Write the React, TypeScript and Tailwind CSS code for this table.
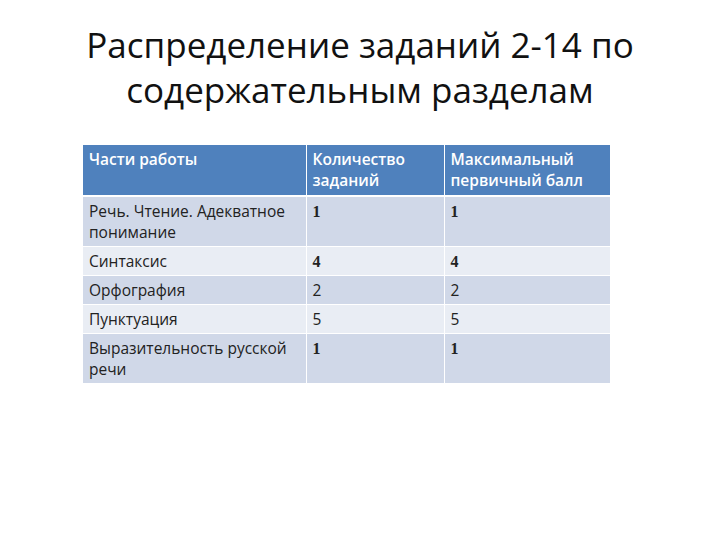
import React from 'react';

// Rows of the distribution table; serif marks the digits drawn in the serif face
const rows = [
  { part: 'Речь. Чтение. Адекватное понимание', count: '1', max: '1', serif: true, tall: true },
  { part: 'Синтаксис', count: '4', max: '4', serif: true, tall: false },
  { part: 'Орфография', count: '2', max: '2', serif: false, tall: false },
  { part: 'Пунктуация', count: '5', max: '5', serif: false, tall: false },
  { part: 'Выразительность русской речи', count: '1', max: '1', serif: true, tall: true },
];

const App = () => {
  return (
    <div
      className="w-[720px] h-[540px] bg-white text-black overflow-hidden"
      style={{ fontFamily: '"Open Sans", "Noto Sans", sans-serif' }}
    >
      <h1 className="pt-[22px] text-center text-[35px] leading-[45px] font-normal text-[#111]">
        Распределение заданий 2-14 по
        <br />
        содержательным разделам
      </h1>

      <table className="ml-[83px] mt-[33px] w-[527px] border-collapse text-[15.5px] leading-[21px] table-fixed">
        <colgroup>
          <col className="w-[223px]" />
          <col className="w-[138px]" />
          <col className="w-[166px]" />
        </colgroup>
        <thead>
          <tr className="bg-[#4f81bd] text-white">
            <th className="h-[50px] px-[6px] pt-[4px] pb-[4px] text-left align-top font-semibold border-r border-b-2 border-white">
              Части работы
            </th>
            <th className="px-[6px] pt-[4px] pb-[4px] text-left align-top font-semibold border-r border-b-2 border-white">
              Количество заданий
            </th>
            <th className="px-[6px] pt-[4px] pb-[4px] text-left align-top font-semibold border-b-2 border-white">
              Максимальный первичный балл
            </th>
          </tr>
        </thead>
        <tbody>
          {rows.map((r, i) => (
            <tr key={i} className={i % 2 === 0 ? 'bg-[#d0d8e8]' : 'bg-[#e9edf4]'}>
              <td
                className={`${r.tall ? 'h-[49px]' : 'h-[28px]'} px-[6px] pt-[4px] pb-[3px] align-top border-r border-b border-white text-[#222]`}
              >
                {r.part}
              </td>
              <td
                className={`px-[6px] pt-[4px] pb-[3px] align-top border-r border-b border-white text-[#222] ${r.serif ? 'font-bold' : ''}`}
                style={r.serif ? { fontFamily: '"Liberation Serif", serif', fontSize: '16px' } : undefined}
              >
                {r.count}
              </td>
              <td
                className={`px-[6px] pt-[4px] pb-[3px] align-top border-b border-white text-[#222] ${r.serif ? 'font-bold' : ''}`}
                style={r.serif ? { fontFamily: '"Liberation Serif", serif', fontSize: '16px' } : undefined}
              >
                {r.max}
              </td>
            </tr>
          ))}
        </tbody>
      </table>
    </div>
  );
};

export default App;
